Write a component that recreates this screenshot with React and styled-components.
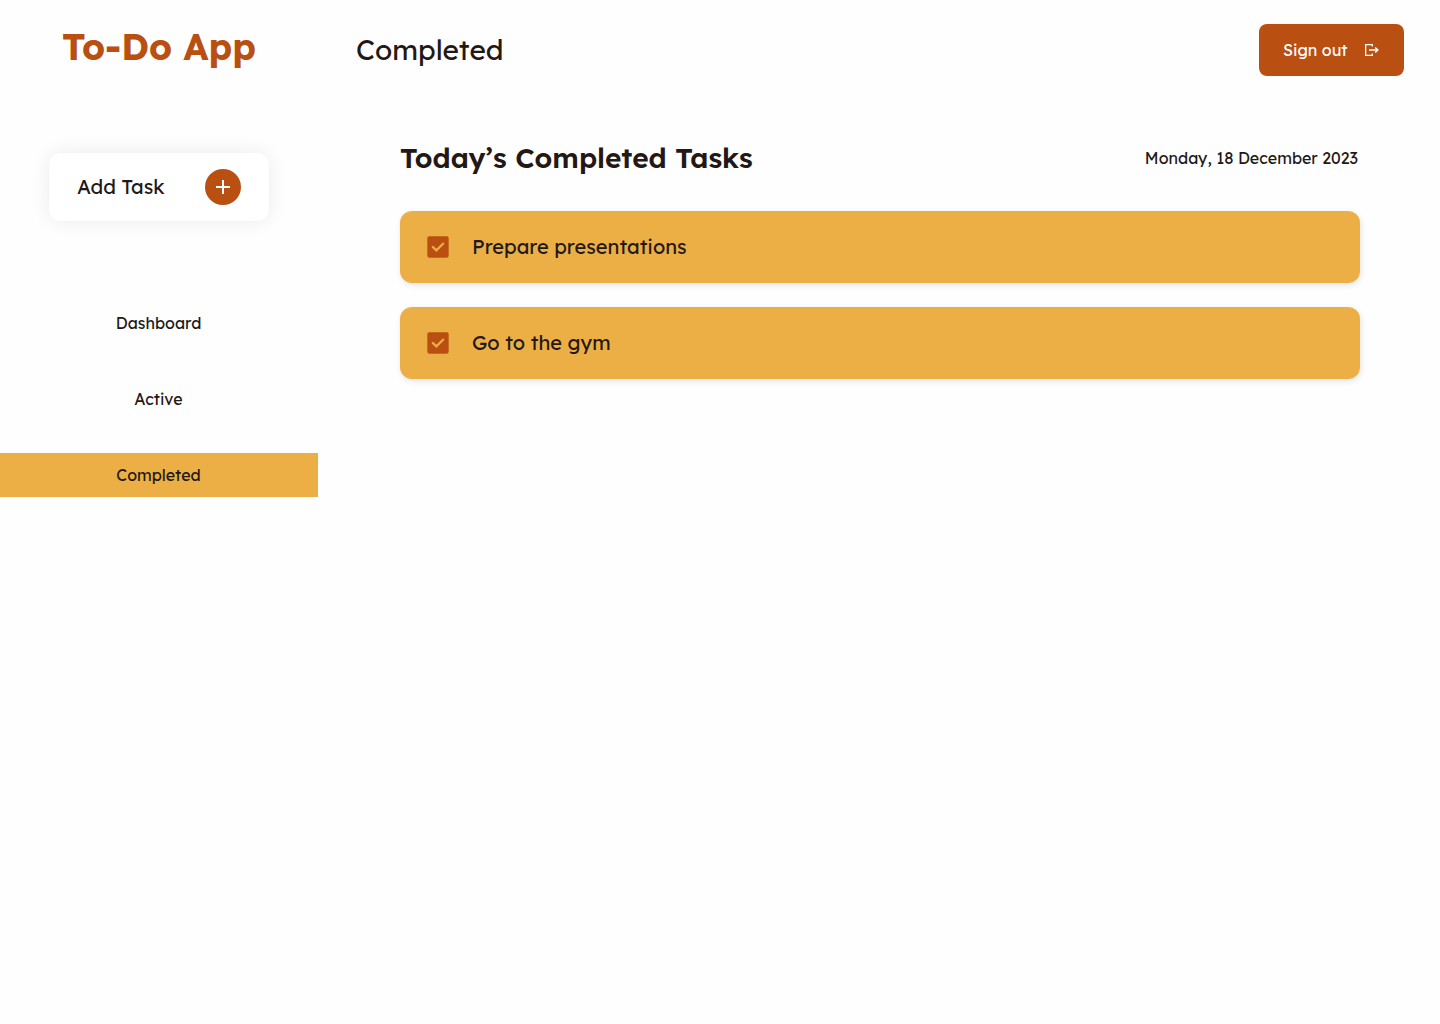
import React from 'react';
import styled, { createGlobalStyle, css } from 'styled-components';

const color = {
  rust: '#b94f11',
  amber: '#ecaf46',
  ink: '#231815',
  page: '#fefefe',
};

const GlobalStyle = createGlobalStyle`
  *, *::before, *::after { box-sizing: border-box; }
  body {
    margin: 0;
    background: ${color.page};
    color: ${color.ink};
    font-family: Lexend, Inter, "Open Sans", sans-serif;
  }
  h1, h2, p, ul { margin: 0; padding: 0; }
  ul { list-style: none; }
  button { font: inherit; color: inherit; border: 0; padding: 0; cursor: pointer; }
`;

const type = css`
  font-size: ${(p) => p.$size}px;
  white-space: nowrap;
`;

const Page = styled.div`
  display: flex;
  min-height: 1024px;
`;

const Sidebar = styled.aside`
  width: 318px;
  flex: none;
  display: flex;
  flex-direction: column;
  align-items: center;
  padding-top: 24px;
`;

const Brand = styled.h1`
  ${type}
  line-height: 46px;
  font-weight: 700;
  color: ${color.rust};
`;

const AddTask = styled.button`
  display: flex;
  align-items: center;
  justify-content: space-between;
  width: 220px;
  height: 68px;
  margin-top: 83px;
  padding: 0 28px;
  border-radius: 12px;
  background: #fff;
  box-shadow: 0 0 20px rgba(0, 0, 0, 0.08);
`;

const AddLabel = styled.span`
  ${type}
  padding-bottom: 1px;
`;

const AddBadge = styled.span`
  display: grid;
  place-items: center;
  width: 36px;
  height: 36px;
  border-radius: 50%;
  background: ${color.rust};
`;

const Nav = styled.nav`
  display: flex;
  flex-direction: column;
  gap: 32px;
  width: 100%;
  margin-top: 80px;
`;

const NavItem = styled.a`
  ${type}
  display: flex;
  align-items: center;
  justify-content: center;
  height: 44px;
  padding-right: 1px;
  background: ${(p) => (p.$active ? color.amber : 'transparent')};
`;

const Main = styled.main`
  flex: 1;
  display: flex;
  flex-direction: column;
`;

const TopBar = styled.header`
  display: flex;
  align-items: center;
  justify-content: space-between;
  height: 100px;
  padding: 0 36px 0 38px;
`;

const PageTitle = styled.h2`
  ${type}
  padding-bottom: 1px;
  font-weight: 400;
`;

const SignOut = styled.button`
  display: flex;
  align-items: center;
  justify-content: space-between;
  width: 145px;
  height: 52px;
  padding: 0 24px;
  border-radius: 8px;
  background: ${color.rust};
  color: #fff;
`;

const SignOutLabel = styled.span`
  ${type}
`;

const Content = styled.section`
  padding: 40px 80px 0 82px;
`;

const SectionHead = styled.div`
  display: flex;
  align-items: center;
  justify-content: space-between;
  height: 35px;
  padding-right: 2px;
`;

const SectionTitle = styled.h2`
  ${type}
  font-weight: 600;
`;

const DateText = styled.p`
  ${type}
`;

const TaskList = styled.ul`
  display: flex;
  flex-direction: column;
  gap: 24px;
  margin-top: 36px;
`;

const Task = styled.li`
  display: flex;
  align-items: center;
  gap: 22px;
  height: 72px;
  padding: 0 26px;
  border-radius: 12px;
  background: ${color.amber};
  box-shadow: 1px 2px 6px rgba(0, 0, 0, 0.11);
`;

const TaskName = styled.span`
  ${type}
  padding-bottom: 1px;
`;

const PlusIcon = () => (
  <svg width="36" height="36" viewBox="0 0 36 36" fill="none" stroke="#fff" strokeWidth="2">
    <path d="M18 11v14M11 18h14" />
  </svg>
);

const SignOutIcon = () => (
  <svg width="16" height="16" viewBox="0 0 16 16" fill="none" stroke="#fff" strokeWidth="1.3">
    <path d="M8.3 4.6V2.65H1.65v10.7H8.3V11.4M5 8h8.8" />
    <path d="M11.2 5.5 13.8 8l-2.6 2.5" strokeWidth="1.5" />
  </svg>
);

const CheckIcon = () => (
  <svg width="24" height="24" viewBox="0 0 24 24">
    <rect x="1.33" y="1.33" width="21.34" height="21.34" rx="1.8" fill={color.rust} />
    <path d="M6.2 11.4 10.4 15.4 17.8 8" fill="none" stroke={color.amber} strokeWidth="2.2" />
  </svg>
);

const navItems = [
  { label: 'Dashboard' },
  { label: 'Active' },
  { label: 'Completed', active: true },
];

const tasks = ['Prepare presentations', 'Go to the gym'];

export default function App() {
  return (
    <>
      <GlobalStyle />
      <Page>
        <Sidebar>
          <Brand $size={36}>To-Do App</Brand>
          <AddTask type="button">
            <AddLabel $size={20}>Add Task</AddLabel>
            <AddBadge><PlusIcon /></AddBadge>
          </AddTask>
          <Nav>
            {navItems.map((item) => (
              <NavItem key={item.label} $size={16} $active={item.active}>
                {item.label}
              </NavItem>
            ))}
          </Nav>
        </Sidebar>
        <Main>
          <TopBar>
            <PageTitle $size={28}>Completed</PageTitle>
            <SignOut type="button">
              <SignOutLabel $size={16}>Sign out</SignOutLabel>
              <SignOutIcon />
            </SignOut>
          </TopBar>
          <Content>
            <SectionHead>
              <SectionTitle $size={28}>Today’s Completed Tasks</SectionTitle>
              <DateText $size={16}>Monday, 18 December 2023</DateText>
            </SectionHead>
            <TaskList>
              {tasks.map((name) => (
                <Task key={name}>
                  <CheckIcon />
                  <TaskName $size={20}>{name}</TaskName>
                </Task>
              ))}
            </TaskList>
          </Content>
        </Main>
      </Page>
    </>
  );
}
